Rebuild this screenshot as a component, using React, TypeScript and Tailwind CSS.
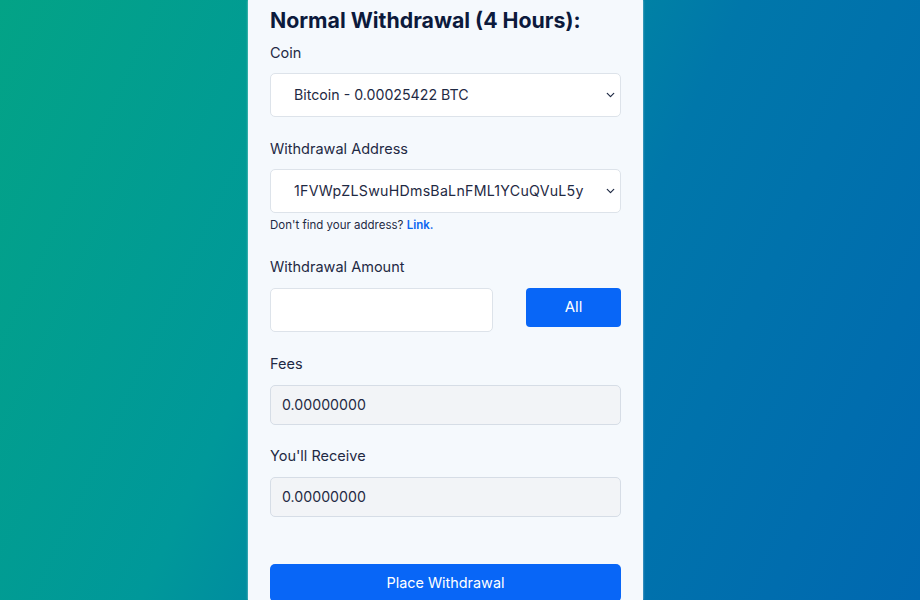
import { ChevronDown } from 'lucide-react';

const font = { fontFamily: 'Inter, "Noto Sans", sans-serif' };

function SelectBox({ value, wide }: { value: string; wide?: boolean }) {
  return (
    <div className="relative">
      <select
        defaultValue={value}
        className={`w-full h-[44px] appearance-none rounded-[5px] border border-[#dde3ea] bg-white pl-[23px] pr-8 text-[14.2px] text-[#1f2a44] outline-none ${wide ? 'tracking-[0.25px]' : ''}`}
      >
        <option>{value}</option>
      </select>
      <ChevronDown
        className="pointer-events-none absolute right-[4px] top-1/2 -translate-y-1/2 text-[#1f2a44]"
        size={13}
        strokeWidth={2.25}
      />
    </div>
  );
}

function ReadOnly({ value }: { value: string }) {
  return (
    <div className="h-[40px] rounded-[5px] border border-[#d6dde6] bg-[#f2f4f7] px-[11px] flex items-center text-[14.2px] text-[#1f2a44]">
      {value}
    </div>
  );
}

export default function App() {
  return (
    <div
      className="h-[600px] w-full overflow-hidden flex bg-[linear-gradient(115deg,#03a386_0%,#00989a_35%,#0077aa_62%,#0068b0_100%)]"
      style={font}
    >
      <div className="ml-[248px] w-[395px] bg-[#f5f9fd] px-[22px] pt-[6px] shadow-[0_0_2px_rgba(255,255,255,0.6)]">
        <h1 className="text-[21.3px] leading-[28px] font-bold text-[#0c1a3c]">Normal Withdrawal (4 Hours):</h1>

        <p className="mt-[8px] mb-[9px] text-[14.5px] leading-[22px] text-[#1f2a44]">Coin</p>
        <SelectBox value="Bitcoin - 0.00025422 BTC" />

        <p className="mt-[21px] mb-[9px] text-[14.5px] leading-[22px] text-[#1f2a44]">Withdrawal Address</p>
        <SelectBox value="1FVWpZLSwuHDmsBaLnFML1YCuQVuL5y" wide />
        <p className="mt-[3px] text-[11.5px] leading-[18px] text-[#1f2a44]">
          Don't find your address? <a className="font-semibold text-[#0a66f0]">Link.</a>
        </p>

        <p className="mt-[22px] mb-[10px] text-[14.5px] leading-[22px] text-[#1f2a44]">Withdrawal Amount</p>
        <div className="flex items-start justify-between">
          <input className="h-[44px] w-[223px] rounded-[5px] border border-[#dde3ea] bg-white px-3 outline-none" />
          <button className="h-[39px] w-[95px] rounded-[4px] bg-[#0866f7] text-[15px] text-white">All</button>
        </div>

        <p className="mt-[21px] mb-[10px] text-[14.5px] leading-[22px] text-[#1f2a44]">Fees</p>
        <ReadOnly value="0.00000000" />

        <p className="mt-[20px] mb-[10px] text-[14.5px] leading-[22px] text-[#1f2a44]">You'll Receive</p>
        <ReadOnly value="0.00000000" />

        <button className="mt-[47px] h-[38px] w-full rounded-[5px] bg-[#0866f7] text-[14.4px] text-white">
          Place Withdrawal
        </button>
      </div>
    </div>
  );
}
